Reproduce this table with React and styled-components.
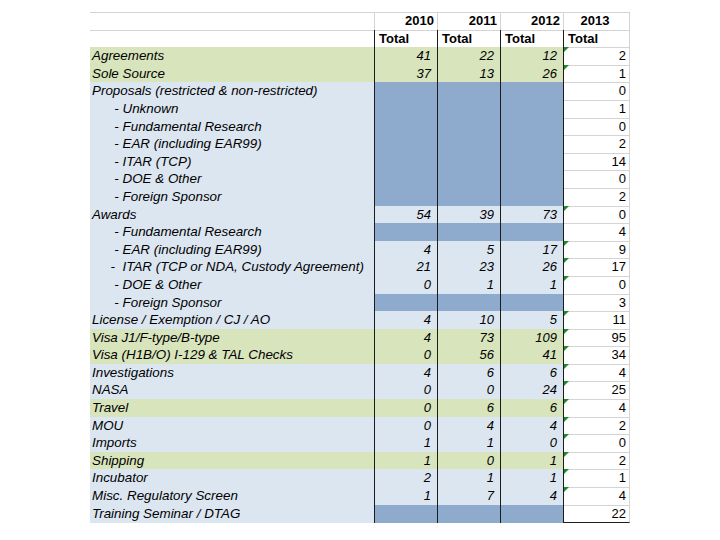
import styled, { createGlobalStyle } from 'styled-components';

const GlobalStyle = createGlobalStyle`
  html, body {
    margin: 0;
    padding: 0;
    background: #ffffff;
  }
  body {
    font-family: 'Liberation Sans', Arial, sans-serif;
    font-size: 13px;
    color: #000;
  }
`;

const GREEN = '#d8e4bc';
const LIGHT = '#dce6f1';
const DARK = '#8eaacc';
const GRID = '#d4d4d4';
const LINE = '#1c1c1c';

const Sheet = styled.div`
  margin: 12px 0 0 90px;
  width: 540px;
  border-top: 1px solid ${GRID};
  border-bottom: 1px solid ${LINE};
`;

const Row = styled.div`
  display: grid;
  grid-template-columns: 285px 63px 63px 63px 66px;
  height: ${(p) => (p.$first ? '16.6px' : '17.6px')};
  line-height: ${(p) => (p.$first ? '16.6px' : '17.6px')};
  background: #fff;
`;

const HeadCell = styled.div`
  box-sizing: border-box;
  font-weight: bold;
  text-align: ${(p) => p.$align || 'right'};
  padding: 0 ${(p) => (p.$align === 'left' ? '0 0 4px' : '3px 0 0')};
  border-right: 1px solid ${(p) => (p.$strong ? LINE : GRID)};
  border-bottom: 1px solid ${(p) => (p.$under ? GRID : 'transparent')};
  white-space: nowrap;
`;

const Label = styled.div`
  box-sizing: border-box;
  background: ${(p) => p.$bg};
  font-style: italic;
  font-size: 13.4px;
  white-space: pre;
  padding-left: 2px;
  border-right: 1px solid ${LINE};
  overflow: hidden;
`;

const Num = styled.div`
  box-sizing: border-box;
  background: ${(p) => p.$bg};
  font-style: italic;
  text-align: right;
  padding-right: 6px;
  border-right: 1px solid ${LINE};
`;

const Latest = styled.div`
  position: relative;
  box-sizing: border-box;
  text-align: right;
  padding-right: 3px;
  border-right: 1px solid ${GRID};
  border-bottom: 1px solid ${(p) => (p.$last ? 'transparent' : GRID)};

  ${(p) =>
    p.$flag &&
    `
    &::before {
      content: '';
      position: absolute;
      left: 0;
      top: 0;
      border-top: 5px solid #1f8a2a;
      border-right: 5px solid transparent;
    }
  `}
`;

const rows = [
  { label: 'Agreements', bg: GREEN, v: [41, 22, 12], t: 2 },
  { label: 'Sole Source', bg: GREEN, v: [37, 13, 26], t: 1 },
  { label: 'Proposals (restricted & non-restricted)', bg: LIGHT, v: null, t: 0 },
  { label: '      - Unknown', bg: LIGHT, v: null, t: 1 },
  { label: '      - Fundamental Research', bg: LIGHT, v: null, t: 0 },
  { label: '      - EAR (including EAR99)', bg: LIGHT, v: null, t: 2 },
  { label: '      - ITAR (TCP)', bg: LIGHT, v: null, t: 14 },
  { label: '      - DOE & Other', bg: LIGHT, v: null, t: 0 },
  { label: '      - Foreign Sponsor', bg: LIGHT, v: null, t: 2 },
  { label: 'Awards', bg: LIGHT, v: [54, 39, 73], t: 0 },
  { label: '      - Fundamental Research', bg: LIGHT, v: null, t: 4 },
  { label: '      - EAR (including EAR99)', bg: LIGHT, v: [4, 5, 17], t: 9 },
  { label: '     -  ITAR (TCP or NDA, Custody Agreement)', bg: LIGHT, v: [21, 23, 26], t: 17 },
  { label: '      - DOE & Other', bg: LIGHT, v: [0, 1, 1], t: 0 },
  { label: '      - Foreign Sponsor', bg: LIGHT, v: null, t: 3 },
  { label: 'License / Exemption / CJ / AO', bg: LIGHT, v: [4, 10, 5], t: 11 },
  { label: 'Visa J1/F-type/B-type', bg: GREEN, v: [4, 73, 109], t: 95 },
  { label: 'Visa (H1B/O) I-129 & TAL Checks', bg: GREEN, v: [0, 56, 41], t: 34 },
  { label: 'Investigations', bg: LIGHT, v: [4, 6, 6], t: 4 },
  { label: 'NASA', bg: LIGHT, v: [0, 0, 24], t: 25 },
  { label: 'Travel', bg: GREEN, v: [0, 6, 6], t: 4 },
  { label: 'MOU', bg: LIGHT, v: [0, 4, 4], t: 2 },
  { label: 'Imports', bg: LIGHT, v: [1, 1, 0], t: 0 },
  { label: 'Shipping', bg: GREEN, v: [1, 0, 1], t: 2 },
  { label: 'Incubator', bg: LIGHT, v: [2, 1, 1], t: 1 },
  { label: 'Misc. Regulatory Screen', bg: LIGHT, v: [1, 7, 4], t: 4 },
  { label: 'Training Seminar / DTAG', bg: LIGHT, v: null, t: 22 },
];

function App() {
  return (
    <>
      <GlobalStyle />
      <Sheet>
        <Row $first>
          <HeadCell $under />
          <HeadCell $under>2010</HeadCell>
          <HeadCell $under>2011</HeadCell>
          <HeadCell $under>2012</HeadCell>
          <HeadCell $under $align="center">2013</HeadCell>
        </Row>
        <Row>
          <HeadCell $strong />
          <HeadCell $strong $align="left">Total</HeadCell>
          <HeadCell $strong $align="left">Total</HeadCell>
          <HeadCell $strong $align="left">Total</HeadCell>
          <HeadCell $align="left" $under>Total</HeadCell>
        </Row>
        {rows.map((r, i) => (
          <Row key={i}>
            <Label $bg={r.bg}>{r.label}</Label>
            {[0, 1, 2].map((k) => (
              <Num key={k} $bg={r.v ? r.bg : DARK}>
                {r.v ? r.v[k] : ''}
              </Num>
            ))}
            <Latest $flag={!!r.v} $last={i === rows.length - 1}>
              {r.t}
            </Latest>
          </Row>
        ))}
      </Sheet>
    </>
  );
}

export default App;
